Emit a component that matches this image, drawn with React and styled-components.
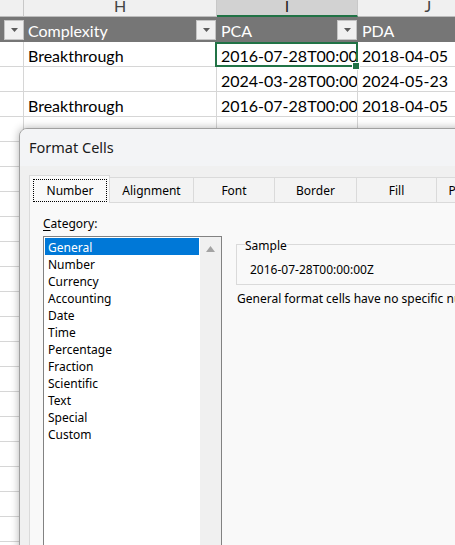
import React from 'react';
import styled, { createGlobalStyle } from 'styled-components';

const Global = createGlobalStyle`
  html, body { margin: 0; padding: 0; background: #fff; }
  body { width: 455px; height: 545px; overflow: hidden; }
  * { box-sizing: border-box; }
`;

const COLS = '24px 193px 141px 141px';

const Page = styled.div`
  position: relative;
  width: 455px;
  height: 545px;
  overflow: hidden;
  background: #fff;
`;

const Sheet = styled.div`
  display: flex;
  flex-direction: column;
  width: 499px;
  font-family: Lato, "Liberation Sans", sans-serif;
  font-size: 16px;
  color: #000;
`;

const Row = styled.div`
  display: grid;
  grid-template-columns: ${COLS};
  height: ${(p) => p.$h}px;
  flex: none;
`;

const ColHead = styled.div`
  height: 17px;
  line-height: 11.5px;
  text-align: center;
  overflow: hidden;
  color: ${(p) => (p.$sel ? '#222' : '#444')};
  background: ${(p) => (p.$sel ? '#d2d2d2' : '#f0f0f0')};
  border-right: 1px solid #c8c8c8;
  border-bottom: ${(p) => (p.$sel ? '2px solid #217346' : '1px solid #bdbdbd')};
`;

const HeadCell = styled.div`
  display: flex;
  align-items: flex-start;
  height: 25px;
  background: #767676;
  color: #fff;
  overflow: hidden;
`;

const HeadLabel = styled.span`
  flex: 1;
  min-width: 0;
  height: 25px;
  line-height: 27px;
  padding-left: 4px;
  white-space: nowrap;
  overflow: hidden;
`;

const FilterBtn = styled.span`
  flex: none;
  width: 20px;
  height: 20px;
  margin: 3px 1px 0 0;
  background: #f0f0f0;
  border: 1px solid #c4c4c4;
  display: flex;
  align-items: center;
  justify-content: center;
`;

const Cell = styled.div`
  position: relative;
  height: 25px;
  border-right: 1px solid #d6d6d6;
  border-bottom: 1px solid #d6d6d6;
  z-index: ${(p) => (p.$sel ? 1 : 0)};
  ${(p) =>
    p.$sel &&
    `
    &::after {
      content: '';
      position: absolute;
      top: 0; left: -2px; right: -1px; bottom: -1px;
      border: 2px solid #217346;
      pointer-events: none;
    }
    &::before {
      content: '';
      position: absolute;
      right: -3px; bottom: -4px;
      width: 6px; height: 6px;
      background: #217346;
      border: 1px solid #fff;
      z-index: 2;
    }
  `}
`;

const CellText = styled.span`
  display: block;
  height: 24px;
  line-height: 28px;
  padding-left: 4px;
  white-space: nowrap;
  overflow: hidden;
`;

/* ---------- dialog ---------- */

const Dialog = styled.div`
  position: absolute;
  left: 19px;
  top: 128px;
  width: 470px;
  height: 440px;
  background: #f0f0f0;
  border: 1px solid #a0a0a0;
  border-radius: 8px 8px 0 0;
  box-shadow: 0 0 9px rgba(0, 0, 0, 0.3);
  display: flex;
  flex-direction: column;
  overflow: hidden;
  font-family: "Noto Sans", "Open Sans", sans-serif;
  font-size: 12px;
  color: #000;
`;

const TitleBar = styled.div`
  height: 37px;
  flex: none;
  display: flex;
  align-items: center;
  padding: 0 0 2px 9px;
  background: #f3f4f6;
  font-size: 14.5px;
  color: #1b1b1b;
`;

const Body = styled.div`
  flex: 1;
  display: flex;
  flex-direction: column;
  padding: 9px 0 0 9px;
`;

const TabStrip = styled.div`
  display: flex;
  align-items: flex-end;
  height: 27px;
  flex: none;
  position: relative;
  z-index: 1;
`;

const Tab = styled.div`
  flex: none;
  width: ${(p) => p.$w}px;
  height: ${(p) => (p.$active ? 28 : 25)}px;
  background: ${(p) => (p.$active ? '#f9f9f9' : '#f3f3f3')};
  border-top: 1px solid #dadada;
  border-right: 1px solid #dadada;
  border-left: ${(p) => (p.$first ? '1px solid #dadada' : 'none')};
  display: flex;
  padding: ${(p) => (p.$active ? '3px 2px 0 3px' : '0')};
  margin-bottom: ${(p) => (p.$active ? '-1px' : '0')};
`;

const TabLabel = styled.span`
  flex: 1;
  display: flex;
  align-items: center;
  justify-content: center;
  white-space: nowrap;
  border: ${(p) => (p.$focus ? '1px dotted #000' : 'none')};
  margin-bottom: ${(p) => (p.$focus ? '1px' : '0')};
`;

const Panel = styled.div`
  flex: 1;
  background: #f9f9f9;
  border: 1px solid #dadada;
  padding: 13px 0 0 13px;
  display: flex;
  gap: 14px;
`;

const LeftCol = styled.div`
  width: 179px;
  flex: none;
  display: flex;
  flex-direction: column;
`;

const Label = styled.div`
  line-height: 16px;
  height: 16px;
  u { text-decoration: underline; text-underline-offset: 2px; }
`;

const ListBox = styled.div`
  margin-top: 4px;
  height: 330px;
  border: 1px solid #828282;
  background: #fff;
  display: flex;
`;

const Items = styled.div`
  flex: 1;
  padding: 1px;
`;

const Item = styled.div`
  height: 17px;
  line-height: 19px;
  padding-left: 3px;
  white-space: nowrap;
  background: ${(p) => (p.$sel ? '#0078d7' : 'transparent')};
  color: ${(p) => (p.$sel ? '#fff' : '#000')};
`;

const ScrollTrack = styled.div`
  width: 21px;
  flex: none;
  background: #f0f0f0;
  display: flex;
  justify-content: center;
  padding-top: 9px;
`;

const RightCol = styled.div`
  flex: 1;
  min-width: 0;
  padding-top: 18px;
  display: flex;
  flex-direction: column;
`;

const Group = styled.fieldset`
  margin: 0;
  padding: 8px 14px 6px 13px;
  border: 1px solid #dadada;
  min-width: 0;
`;

const Legend = styled.legend`
  padding: 4px 0 0 0;
  margin-left: -5px;
  line-height: 16px;
`;

const SampleValue = styled.div`
  line-height: 16px;
  white-space: nowrap;
`;

const Desc = styled.div`
  margin-top: 6px;
  padding-left: 1px;
  line-height: 16px;
  white-space: nowrap;
`;

const Caret = () => (
  <svg width="7" height="4" viewBox="0 0 7 4">
    <polygon points="0,0 7,0 3.5,4" fill="#5a5a5a" />
  </svg>
);

const UpArrow = () => (
  <svg width="9" height="6" viewBox="0 0 9 6">
    <polygon points="0,6 9,6 4.5,0" fill="#a3a3a3" />
  </svg>
);

const data = [
  ['', 'Breakthrough', '2016-07-28T00:00:00Z', '2018-04-05'],
  ['', '', '2024-03-28T00:00:00Z', '2024-05-23'],
  ['', 'Breakthrough', '2016-07-28T00:00:00Z', '2018-04-05'],
];
while (data.length < 21) data.push(['', '', '', '']);

const tabs = [
  ['Number', 81],
  ['Alignment', 84],
  ['Font', 81],
  ['Border', 82],
  ['Fill', 80],
  ['Protection', 82],
];

const categories = [
  'General', 'Number', 'Currency', 'Accounting', 'Date', 'Time',
  'Percentage', 'Fraction', 'Scientific', 'Text', 'Special', 'Custom',
];

export default function App() {
  return (
    <Page>
      <Global />
      <Sheet>
        <Row $h={17}>
          <ColHead />
          <ColHead>H</ColHead>
          <ColHead $sel>I</ColHead>
          <ColHead>J</ColHead>
        </Row>
        <Row $h={25}>
          <HeadCell>
            <HeadLabel />
            <FilterBtn><Caret /></FilterBtn>
          </HeadCell>
          <HeadCell>
            <HeadLabel>Complexity</HeadLabel>
            <FilterBtn><Caret /></FilterBtn>
          </HeadCell>
          <HeadCell>
            <HeadLabel>PCA</HeadLabel>
            <FilterBtn><Caret /></FilterBtn>
          </HeadCell>
          <HeadCell>
            <HeadLabel>PDA</HeadLabel>
            <FilterBtn><Caret /></FilterBtn>
          </HeadCell>
        </Row>
        {data.map((r, i) => (
          <Row $h={25} key={i}>
            {r.map((v, j) => (
              <Cell key={j} $sel={i === 0 && j === 2}>
                <CellText>{v}</CellText>
              </Cell>
            ))}
          </Row>
        ))}
      </Sheet>

      <Dialog>
        <TitleBar>Format Cells</TitleBar>
        <Body>
          <TabStrip>
            {tabs.map(([t, w], i) => (
              <Tab key={t} $w={w} $active={i === 0} $first={i === 0}>
                <TabLabel $focus={i === 0}>{t}</TabLabel>
              </Tab>
            ))}
          </TabStrip>
          <Panel>
            <LeftCol>
              <Label><u>C</u>ategory:</Label>
              <ListBox>
                <Items>
                  {categories.map((c, i) => (
                    <Item key={c} $sel={i === 0}>{c}</Item>
                  ))}
                </Items>
                <ScrollTrack><UpArrow /></ScrollTrack>
              </ListBox>
            </LeftCol>
            <RightCol>
              <Group>
                <Legend>Sample</Legend>
                <SampleValue>2016-07-28T00:00:00Z</SampleValue>
              </Group>
              <Desc>General format cells have no specific number format.</Desc>
            </RightCol>
          </Panel>
        </Body>
      </Dialog>
    </Page>
  );
}
